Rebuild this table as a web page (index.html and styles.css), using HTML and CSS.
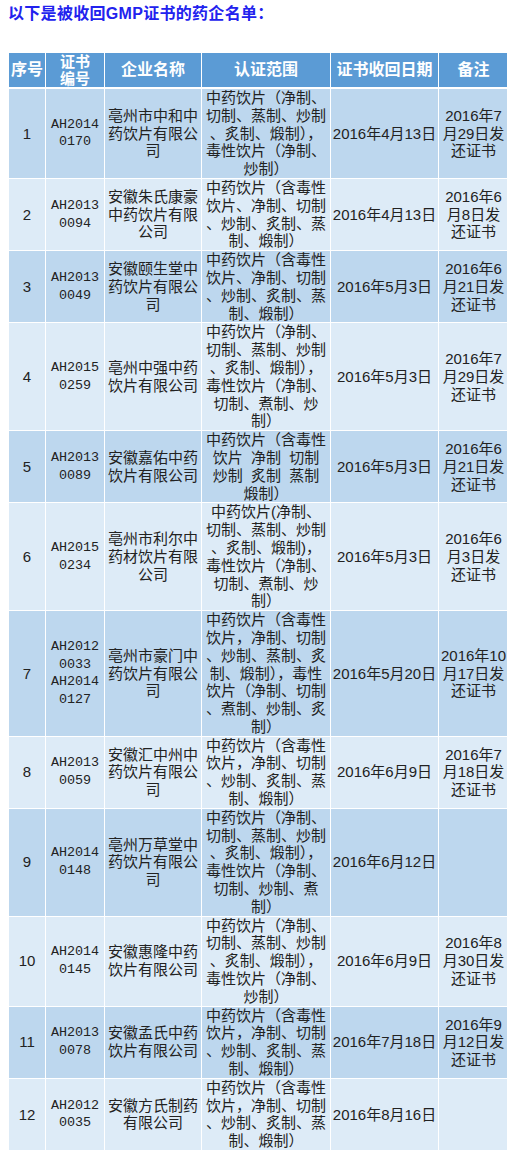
FILE: index.html
```html
<!DOCTYPE html>
<html lang="zh-CN">
<head>
<meta charset="utf-8">
<title>被收回GMP证书的药企名单</title>
<link rel="stylesheet" href="styles.css">
</head>
<body>
<div class="title">以下是被收回GMP证书的药企名单：</div>
<table class="list">
  <colgroup>
    <col class="c1"><col class="c2"><col class="c3"><col class="c4"><col class="c5"><col class="c6">
  </colgroup>
  <thead>
    <tr>
      <th><div class="hd">序号</div></th>
      <th><div class="hd hd-two">证书<br>编号</div></th>
      <th><div class="hd">企业名称</div></th>
      <th><div class="hd">认证范围</div></th>
      <th><div class="hd">证书收回日期</div></th>
      <th><div class="hd">备注</div></th>
    </tr>
  </thead>
  <tbody>
    <tr class="dark">
      <td>1</td><td class="code">AH2014<br>0170</td>
      <td>亳州市中和中<br>药饮片有限公<br>司</td>
      <td>中药饮片（净制、<br>切制、蒸制、炒制<br>、炙制、煅制），<br>毒性饮片（净制、<br>炒制）</td>
      <td>2016年4月13日</td>
      <td>2016年7<br>月29日发<br>还证书</td>
    </tr>
    <tr class="light">
      <td>2</td><td class="code">AH2013<br>0094</td>
      <td>安徽朱氏康豪<br>中药饮片有限<br>公司</td>
      <td>中药饮片（含毒性<br>饮片、净制、切制<br>、炒制、炙制、蒸<br>制、煅制）</td>
      <td>2016年4月13日</td>
      <td>2016年6<br>月8日发<br>还证书</td>
    </tr>
    <tr class="dark">
      <td>3</td><td class="code">AH2013<br>0049</td>
      <td>安徽颐生堂中<br>药饮片有限公<br>司</td>
      <td>中药饮片（含毒性<br>饮片、净制、切制<br>、炒制、炙制、蒸<br>制、煅制）</td>
      <td>2016年5月3日</td>
      <td>2016年6<br>月21日发<br>还证书</td>
    </tr>
    <tr class="light">
      <td>4</td><td class="code">AH2015<br>0259</td>
      <td>亳州中强中药<br>饮片有限公司</td>
      <td>中药饮片（净制、<br>切制、蒸制、炒制<br>、炙制、煅制），<br>毒性饮片（净制、<br>切制、煮制、炒<br>制）</td>
      <td>2016年5月3日</td>
      <td>2016年7<br>月29日发<br>还证书</td>
    </tr>
    <tr class="dark">
      <td>5</td><td class="code">AH2013<br>0089</td>
      <td>安徽嘉佑中药<br>饮片有限公司</td>
      <td>中药饮片（含毒性<br>饮片&nbsp;&nbsp;净制&nbsp;&nbsp;切制<br>炒制&nbsp;&nbsp;炙制&nbsp;&nbsp;蒸制<br>煅制）</td>
      <td>2016年5月3日</td>
      <td>2016年6<br>月21日发<br>还证书</td>
    </tr>
    <tr class="light">
      <td>6</td><td class="code">AH2015<br>0234</td>
      <td>亳州市利尔中<br>药材饮片有限<br>公司</td>
      <td>中药饮片(净制、<br>切制、蒸制、炒制<br>、炙制、煅制)，<br>毒性饮片（净制、<br>切制、煮制、炒<br>制）</td>
      <td>2016年5月3日</td>
      <td>2016年6<br>月3日发<br>还证书</td>
    </tr>
    <tr class="dark">
      <td>7</td><td class="code">AH2012<br>0033<br>AH2014<br>0127</td>
      <td>亳州市豪门中<br>药饮片有限公<br>司</td>
      <td>中药饮片（含毒性<br>饮片，净制、切制<br>、炒制、蒸制、炙<br>制、煅制），毒性<br>饮片（净制、切制<br>、煮制、炒制、炙<br>制）</td>
      <td>2016年5月20日</td>
      <td>2016年10<br>月17日发<br>还证书</td>
    </tr>
    <tr class="light">
      <td>8</td><td class="code">AH2013<br>0059</td>
      <td>安徽汇中州中<br>药饮片有限公<br>司</td>
      <td>中药饮片（含毒性<br>饮片，净制、切制<br>、炒制、炙制、蒸<br>制、煅制）</td>
      <td>2016年6月9日</td>
      <td>2016年7<br>月18日发<br>还证书</td>
    </tr>
    <tr class="dark">
      <td>9</td><td class="code">AH2014<br>0148</td>
      <td>亳州万草堂中<br>药饮片有限公<br>司</td>
      <td>中药饮片（净制、<br>切制、蒸制、炒制<br>、炙制、煅制），<br>毒性饮片（净制、<br>切制、炒制、煮<br>制）</td>
      <td>2016年6月12日</td>
      <td></td>
    </tr>
    <tr class="light">
      <td>10</td><td class="code">AH2014<br>0145</td>
      <td>安徽惠隆中药<br>饮片有限公司</td>
      <td>中药饮片（净制、<br>切制、蒸制、炒制<br>、炙制、煅制），<br>毒性饮片（净制、<br>炒制）</td>
      <td>2016年6月9日</td>
      <td>2016年8<br>月30日发<br>还证书</td>
    </tr>
    <tr class="dark">
      <td>11</td><td class="code">AH2013<br>0078</td>
      <td>安徽孟氏中药<br>饮片有限公司</td>
      <td>中药饮片（含毒性<br>饮片，净制、切制<br>、炒制、炙制、蒸<br>制、煅制）</td>
      <td>2016年7月18日</td>
      <td>2016年9<br>月12日发<br>还证书</td>
    </tr>
    <tr class="light">
      <td>12</td><td class="code">AH2012<br>0035</td>
      <td>安徽方氏制药<br>有限公司</td>
      <td>中药饮片（含毒性<br>饮片，净制、切制<br>、炒制、炙制、蒸<br>制、煅制）</td>
      <td>2016年8月16日</td>
      <td></td>
    </tr>
  </tbody>
</table>
</body>
</html>
```
FILE: styles.css
```css
html, body {
  background: #ffffff;
}
body {
  margin: 4px 8px 0;
  font-family: "Liberation Sans", "Noto Sans CJK SC", sans-serif;
  color: #222222;
}
.title {
  font-size: 16px;
  line-height: 20px;
  font-weight: bold;
  color: #2222ee;
  margin-bottom: 28px;
  letter-spacing: 0.3px;
}
.list {
  table-layout: fixed;
  width: 501px;
  border-collapse: separate;
  border-spacing: 1px;
}
.c1 { width: 36px; }
.c2 { width: 58px; }
.c3 { width: 96px; }
.c4 { width: 128px; }
.c5 { width: 107px; }
.c6 { width: 69px; }
.list th {
  padding: 0;
  background: #5b9bd5;
  color: #ffffff;
  font-size: 16px;
  font-weight: bold;
  border-bottom: 1px solid #ffffff;
}
.hd {
  height: 34px;
  line-height: 18px;
  display: flex;
  align-items: center;
  justify-content: center;
  text-align: center;
  white-space: nowrap;
}
.hd.hd-two {
  font-size: 15px;
  line-height: 17px;
}
.list td {
  padding: 0;
  font-size: 15px;
  line-height: 17.8px;
  text-align: center;
  vertical-align: middle;
  white-space: nowrap;
}
.list td.code {
  font-family: "Liberation Mono", monospace;
  font-size: 13.4px;
}
.dark td {
  background: #bdd7ee;
}
.light td {
  background: #ddebf7;
}
```
